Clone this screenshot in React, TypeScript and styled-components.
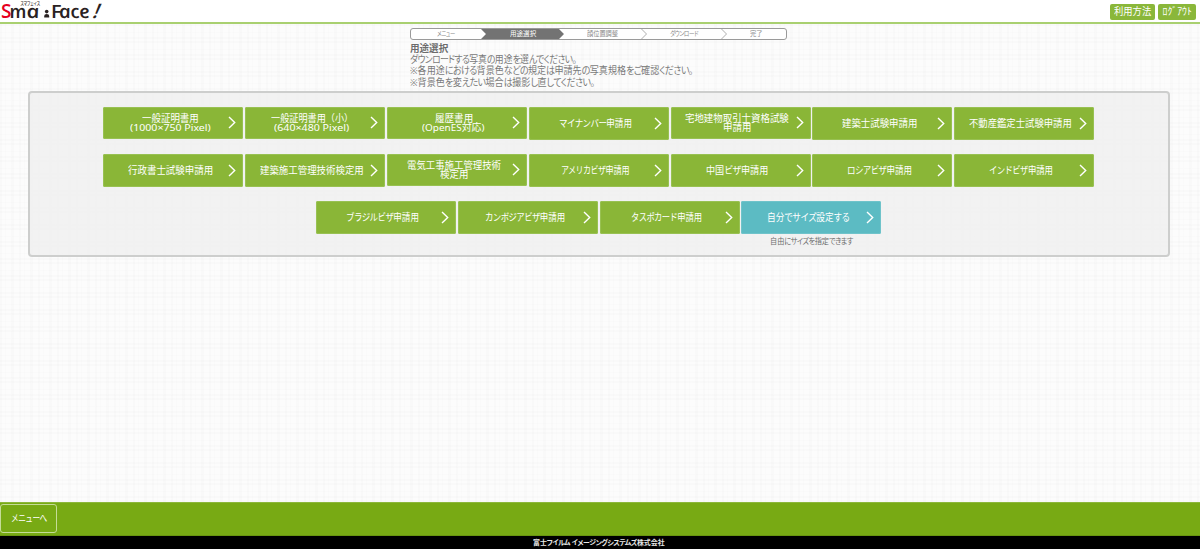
import React, { useLayoutEffect, useRef, useState } from "react";
import styled, { createGlobalStyle, css } from "styled-components";

const GlobalStyle = createGlobalStyle`
  * { box-sizing: border-box; }
  html, body { margin: 0; padding: 0; }
  body {
    font-family: "Noto Sans", "Noto Sans CJK JP", sans-serif;
    font-feature-settings: "palt";
    color: #7a7a7a;
    background-color: #fcfcfc;
    background-image:
      repeating-linear-gradient(90deg, rgba(0,0,0,.01) 0 2px, transparent 2px 5px, rgba(0,0,0,.008) 5px 6px, transparent 6px 11px, rgba(0,0,0,.01) 11px 14px, transparent 14px 19px),
      repeating-linear-gradient(0deg, rgba(0,0,0,.01) 0 2px, transparent 2px 6px, rgba(0,0,0,.008) 6px 7px, transparent 7px 13px, rgba(0,0,0,.01) 13px 15px, transparent 15px 17px);
  }
`;

const FitBox = styled.span`
  display: inline-block;
  text-align: left;
  white-space: nowrap;
`;
const FitInner = styled.span`
  display: inline-block;
  transform-origin: left center;
`;
const Kana = styled.span`
  letter-spacing: -0.07em;
`;

/* Sets a line of text to an exact width, with kana tighter than kanji. */
function Fit({ text, width }: { text: string; width: number }) {
  const ref = useRef<HTMLSpanElement>(null);
  const [scale, setScale] = useState(1);
  useLayoutEffect(() => {
    if (ref.current) setScale(width / ref.current.offsetWidth);
  }, [text, width]);
  return (
    <FitBox style={{ width }}>
      <FitInner ref={ref} style={{ transform: `scaleX(${scale})` }}>
        {text.split(/([\u3040-\u30ff]+)/).map((part, i) =>
          i % 2 ? <Kana key={i}>{part}</Kana> : part
        )}
      </FitInner>
    </FitBox>
  );
}

const Page = styled.div`
  display: flex;
  flex-direction: column;
  height: 549px;
`;
const Header = styled.header`
  display: flex;
  justify-content: space-between;
  align-items: flex-start;
  height: 24px;
  flex: none;
  background: #fff;
  border-bottom: 2px solid #a9d070;
`;
const Logo = styled.svg`
  display: block;
  width: 106px;
  height: 22px;
  overflow: visible;
`;
const HeaderNav = styled.nav`
  display: flex;
  gap: 3px;
  padding: 4px 4px 0 0;
`;
const NavButton = styled.button<{ $w: number }>`
  display: flex;
  align-items: center;
  justify-content: center;
  width: ${(p) => p.$w}px;
  height: 15.5px;
  padding: 0;
  border: 0;
  border-radius: 2px;
  background: #8ab73a;
  color: #fff;
  font: 9.8px/15px "Noto Sans", "Noto Sans CJK JP", sans-serif;
`;

const Intro = styled.section`
  width: 377px;
  margin: 4px 0 0 410px;
  flex: none;
`;
const Steps = styled.ol`
  display: flex;
  height: 12px;
  margin: 0;
  padding: 0;
  list-style: none;
  overflow: hidden;
  border: 1px solid #9a9a9a;
  border-radius: 3px;
  background: #fff;
`;
const Step = styled.li<{ $w: number; $active?: boolean }>`
  display: flex;
  align-items: center;
  justify-content: center;
  width: ${(p) => p.$w}px;
  flex: none;
  font-size: 6.8px;
  line-height: 10px;
  color: #8a8a8a;
  ${(p) =>
    p.$active &&
    css`
      background: #737373;
      color: #fff;
      clip-path: polygon(0 0, calc(100% - 5px) 0, 100% 50%, calc(100% - 5px) 100%, 0 100%, 5px 50%);
    `}
`;
const StepArrow = styled.svg`
  width: 6px;
  height: 10px;
  flex: none;
`;
const Title = styled.h1`
  height: 11.2px;
  margin: 3px 0 0;
  font-size: 9.8px;
  font-weight: 700;
  line-height: 11.2px;
  color: #6c6c6c;
`;
const Line = styled.p`
  margin: 0;
  height: 11.3px;
  font-size: 9.8px;
  line-height: 11.3px;
`;

const Panel = styled.main`
  display: flex;
  flex-direction: column;
  align-items: center;
  width: 1142px;
  height: 166px;
  margin: 3px 0 0 28px;
  padding: 13.5px 0.6px 0 0;
  flex: none;
  border: 2px solid #cdcecd;
  border-radius: 4px;
  background: rgba(240, 240, 240, 0.85);
`;
const Row = styled.div`
  display: flex;
  gap: 1.8px;
  height: 47px;
`;
const Cell = styled.div`
  width: 140px;
  text-align: center;
`;
const UseButton = styled.button<{ $blue?: boolean; $double?: boolean }>`
  display: flex;
  align-items: center;
  width: 140px;
  height: ${(p) => (p.$double ? 32.4 : 33.4)}px;
  padding: 0 7px 0 0;
  border: 0;
  border-radius: 2px;
  background: ${(p) => (p.$blue ? "#5cbbc3" : "#8ab637")};
  box-shadow: inset 0 0 0 1px ${(p) => (p.$blue ? "#6fc3ca" : "#98c152")};
  color: #fff;
  font: 9.8px/9.6px "Noto Sans", "Noto Sans CJK JP", sans-serif;
`;
const UseLabel = styled.span`
  display: flex;
  flex-direction: column;
  align-items: center;
  width: 126px;
  margin: 1px 0 0 4px;
`;
const Chevron = styled.svg`
  width: 8px;
  height: 13px;
  margin-left: -4.5px;
  flex: none;
`;
const Hint = styled.small`
  display: block;
  font-size: 8px;
  line-height: 14px;
  color: #6c6c6c;
`;

const ActionBar = styled.div`
  display: flex;
  align-items: center;
  height: 34.5px;
  margin-top: auto;
  flex: none;
  background: #78aa14;
  border-top: 1px solid #8cb73a;
  border-bottom: 1px solid #69960f;
`;
const MenuButton = styled.button`
  width: 57px;
  height: 29px;
  padding: 0;
  border: 1px solid #c5dc97;
  border-radius: 3px;
  background: transparent;
  color: #fff;
  font: 9.8px/28px "Noto Sans", "Noto Sans CJK JP", sans-serif;
`;
const Footer = styled.footer`
  height: 13px;
  flex: none;
  background: #000;
  color: #e8e8e8;
  text-align: center;
  font-size: 7px;
  font-weight: 700;
  line-height: 14px;
  padding-right: 3px;
`;

type Text = [string, number];
type Use = { lines: Text[]; blue?: boolean; hint?: Text };

const rows: Use[][] = [
  [
    { lines: [["一般証明書用", 57], ["(1000×750 Pixel)", 81]] },
    { lines: [["一般証明書用（小）", 82], ["(640×480 Pixel)", 75]] },
    { lines: [["履歴書用", 38], ["(OpenES対応)", 63]] },
    { lines: [["マイナンバー申請用", 73]] },
    { lines: [["宅地建物取引士資格試験", 104], ["申請用", 28]] },
    { lines: [["建築士試験申請用", 75]] },
    { lines: [["不動産鑑定士試験申請用", 103]] },
  ],
  [
    { lines: [["行政書士試験申請用", 85]] },
    { lines: [["建築施工管理技術検定用", 104]] },
    { lines: [["電気工事施工管理技術", 94], ["検定用", 28]] },
    { lines: [["アメリカビザ申請用", 69]] },
    { lines: [["中国ビザ申請用", 62]] },
    { lines: [["ロシアビザ申請用", 65]] },
    { lines: [["インドビザ申請用", 64]] },
  ],
  [
    { lines: [["ブラジルビザ申請用", 73]] },
    { lines: [["カンボジアビザ申請用", 80]] },
    { lines: [["タスポカード申請用", 71]] },
    { lines: [["自分でサイズ設定する", 83]], blue: true, hint: ["自由にサイズを指定できます", 83] },
  ],
];

function StepDivider() {
  return (
    <StepArrow viewBox="0 0 6 10">
      <path d="M0.5 0L5.5 5L0.5 10" fill="none" stroke="#a5a5a5" strokeWidth="0.9" />
    </StepArrow>
  );
}

function SmaFaceLogo() {
  return (
    <Logo viewBox="0 0 106 22" aria-label="Sma Face!">
      <g fontFamily="Open Sans" fontWeight="600" fill="#2a2222">
        <text x="20.5" y="5" fontFamily="Noto Sans CJK JP" fontSize="4.2" fontWeight="500" textLength="19.5" lengthAdjust="spacingAndGlyphs">スマフェイス</text>
        <text x="1" y="17.5" fontSize="19" fill="#e60020" textLength="10.5" lengthAdjust="spacingAndGlyphs">S</text>
        <g fontStyle="italic" transform="translate(0 17.5) skewX(12)">
          <text x="10.5" y="0" fontSize="18.5" textLength="17" lengthAdjust="spacingAndGlyphs">m</text>
          <text x="27.5" y="0" fontSize="18.5" textLength="13" lengthAdjust="spacingAndGlyphs">a</text>
        </g>
        <circle cx="46.7" cy="11.6" r="1.8" />
        <path d="M44.2 17.5v-1.6q0-2 2.5-2t2.5 2v1.6z" />
        <text x="51" y="17.5" fontSize="18.5" textLength="10.5" lengthAdjust="spacingAndGlyphs">F</text>
        <g fontStyle="italic" transform="translate(0 17.5) skewX(12)">
          <text x="60" y="0" fontSize="18.5" textLength="11.8" lengthAdjust="spacingAndGlyphs">a</text>
          <text x="71.5" y="0" fontSize="18.5" textLength="9" lengthAdjust="spacingAndGlyphs">c</text>
          <text x="80.3" y="0" fontSize="18.5" textLength="10.5" lengthAdjust="spacingAndGlyphs">e</text>
        </g>
        <text transform="translate(91.5 17.5) skewX(-23)" fontSize="20">!</text>
      </g>
    </Logo>
  );
}

export default function App() {
  return (
    <Page lang="ja">
      <GlobalStyle />
      <Header>
        <SmaFaceLogo />
        <HeaderNav>
          <NavButton $w={45}><Fit text="利用方法" width={37} /></NavButton>
          <NavButton $w={38}><Fit text="ﾛｸﾞｱｳﾄ" width={29} /></NavButton>
        </HeaderNav>
      </Header>
      <Intro>
        <Steps>
          <Step $w={70}><Fit text="メニュー" width={18} /></Step>
          <Step $w={83} $active><Fit text="用途選択" width={26} /></Step>
          <Step $w={77}><Fit text="顔位置調整" width={31} /></Step>
          <StepDivider />
          <Step $w={74}><Fit text="ダウンロード" width={28} /></Step>
          <StepDivider />
          <Step $w={59}><Fit text="完了" width={13} /></Step>
        </Steps>
        <Title><Fit text="用途選択" width={38} /></Title>
        <Line><Fit text="ダウンロードする写真の用途を選んでください。" width={167} /></Line>
        <Line><Fit text="※各用途における背景色などの規定は申請先の写真規格をご確認ください。" width={283} /></Line>
        <Line><Fit text="※背景色を変えたい場合は撮影し直してください。" width={185} /></Line>
      </Intro>
      <Panel>
        {rows.map((row, r) => (
          <Row key={r}>
            {row.map((use) => (
              <Cell key={use.lines[0][0]}>
                <UseButton $blue={use.blue} $double={use.lines.length > 1}>
                  <UseLabel>
                    {use.lines.map(([text, width]) => (
                      <Fit key={text} text={text} width={width} />
                    ))}
                  </UseLabel>
                  <Chevron viewBox="0 0 8 13">
                    <path d="M1 1L6.7 6.5L1 12" fill="none" stroke="#fff" strokeWidth="1.4" />
                  </Chevron>
                </UseButton>
                {use.hint && <Hint><Fit text={use.hint[0]} width={use.hint[1]} /></Hint>}
              </Cell>
            ))}
          </Row>
        ))}
      </Panel>
      <ActionBar>
        <MenuButton><Fit text="メニューへ" width={36} /></MenuButton>
      </ActionBar>
      <Footer><Fit text="富士フイルム イメージングシステムズ株式会社" width={132} /></Footer>
    </Page>
  );
}
